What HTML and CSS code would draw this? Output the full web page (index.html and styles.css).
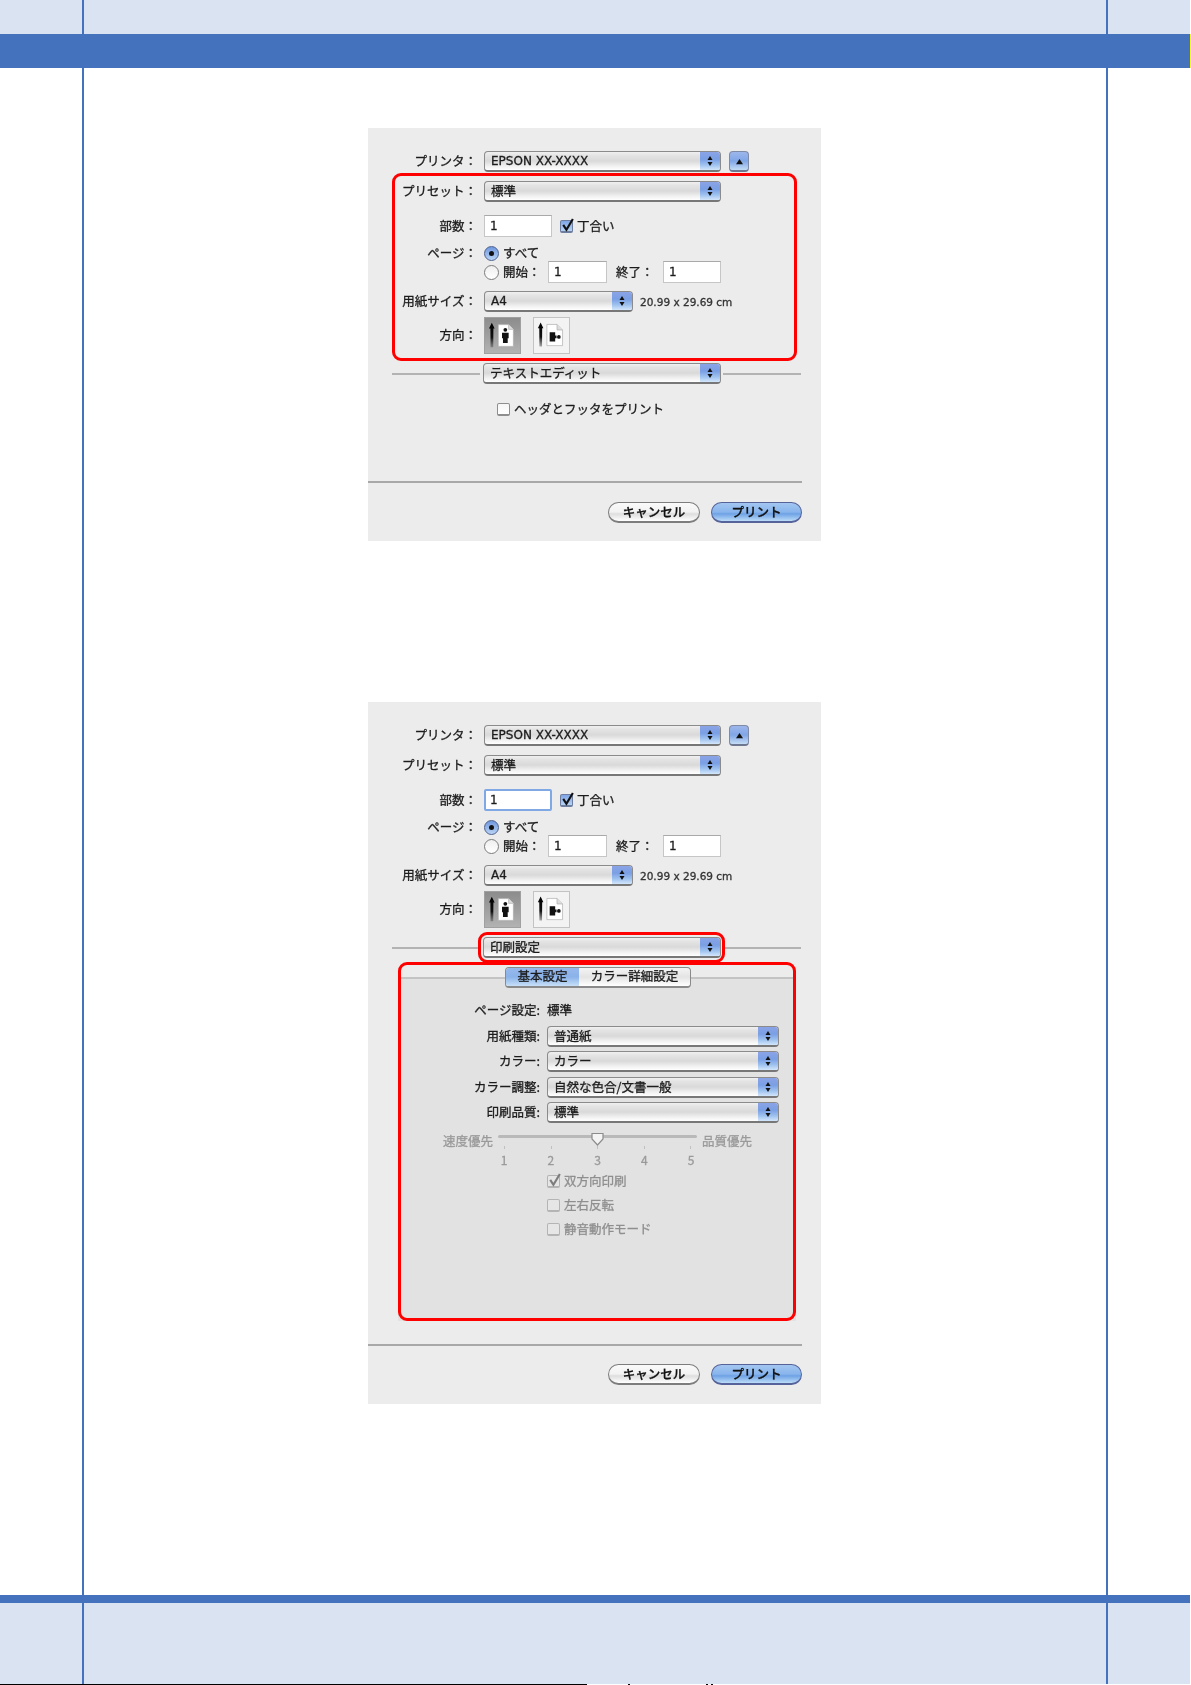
FILE: index.html
```html
<!DOCTYPE html>
<html lang="ja">
<head>
<meta charset="utf-8">
<title>プリント設定</title>
<link rel="stylesheet" href="styles.css">
</head>
<body>
<svg class="defs" aria-hidden="true">
  <defs>
    <linearGradient id="fade" x1="0" y1="0" x2="0" y2="1">
      <stop offset="0" stop-color="#000"/>
      <stop offset=".6" stop-color="#111"/>
      <stop offset="1" stop-color="#555" stop-opacity=".5"/>
    </linearGradient>
  </defs>
  <symbol id="updown" viewBox="0 0 8 14"><path d="M4 2 6.500 6H1.500zM4 12 1.500 8h5z"/></symbol>
  <symbol id="portrait" viewBox="0 0 37 37">
    <path d="M7.200 5 10.200 11 8.900 11 8.700 31 5.900 31 5.700 11 4.200 11z" fill="url(#fade)"/>
    <path d="M14 7H25L30 12V30H14z" fill="#fff" stroke="#aaa" stroke-width=".7"/>
    <path d="M25 7V12H30" fill="#ddd" stroke="#aaa" stroke-width=".7"/>
    <circle cx="21.500" cy="12.500" r="2" fill="#111"/>
    <path d="M18 15.500H25V21.500H24V26.500H19V21.500H18z" fill="#111"/>
  </symbol>
  <symbol id="landscape" viewBox="0 0 38 38">
    <path d="M7.200 5 10.200 11 8.900 11 8.700 31 5.900 31 5.700 11 4.200 11z" fill="url(#fade)"/>
    <path d="M14 7H25L31 13V30H14z" fill="#fff" stroke="#aaa" stroke-width=".7"/>
    <path d="M25 7V13H31" fill="#ddd" stroke="#aaa" stroke-width=".7"/>
    <path d="M17 15.500H23V19H24.500V22H23V25.500H17z" fill="#111"/>
    <circle cx="27" cy="20.500" r="2" fill="#111"/>
  </symbol>
</svg>
<div class="page">
  <div class="cols band"><div></div><div class="mid"></div><div></div></div>
  <div class="bar bar-top"></div>
  <div class="cols content">
    <div></div>
    <main class="mid sheet">

      <section class="dialog dialog-short">
        <div class="row row-printer">
          <span class="label">プリンタ：</span>
          <div class="select w-main"><span class="value latin">EPSON XX-XXXX</span><span class="stepper"><svg class="updown"><use href="#updown"/></svg></span></div>
          <button class="disclose"><svg viewBox="0 0 10 8"><path d="M5 1 9 7H1z"/></svg></button>
        </div>
        <div class="row row-preset">
          <span class="label">プリセット：</span>
          <div class="select w-main"><span class="value">標準</span><span class="stepper"><svg class="updown"><use href="#updown"/></svg></span></div>
        </div>
        <div class="row row-copies">
          <span class="label">部数：</span>
          <span class="field w-copies">1</span>
          <span class="check checked copies-check"><svg viewBox="0 0 14 14"><path d="M3 6.500 6 11 12 1" /></svg></span>
          <span class="opt">丁合い</span>
        </div>
        <div class="row row-all">
          <span class="label">ページ：</span>
          <span class="radio on"></span>
          <span class="opt">すべて</span>
        </div>
        <div class="row row-range">
          <span class="label"></span>
          <span class="radio"></span>
          <span class="opt range-from">開始：</span>
          <span class="field w-range">1</span>
          <span class="opt range-to">終了：</span>
          <span class="field w-range">1</span>
        </div>
        <div class="row row-paper">
          <span class="label">用紙サイズ：</span>
          <div class="select w-paper"><span class="value latin">A4</span><span class="stepper"><svg class="updown"><use href="#updown"/></svg></span></div>
          <span class="size">20.99 x 29.69 cm</span>
        </div>
        <div class="row row-orient">
          <span class="label">方向：</span>
          <span class="orient selected"><svg><use href="#portrait"/></svg></span>
          <span class="orient"><svg><use href="#landscape"/></svg></span>
        </div>
        <div class="sep">
          <span class="rule rule-l"></span>
          <div class="select w-sep"><span class="value">テキストエディット</span><span class="stepper"><svg class="updown"><use href="#updown"/></svg></span></div>
          <span class="rule rule-r"></span>
        </div>
        <div class="row row-hf">
          <span class="check"></span>
          <span class="opt">ヘッダとフッタをプリント</span>
        </div>
        <footer class="actions">
          <button class="btn">キャンセル</button>
          <button class="btn primary">プリント</button>
        </footer>
        <div class="mark mark-a"></div>
      </section>

      <section class="dialog dialog-tall">
        <div class="row row-printer">
          <span class="label">プリンタ：</span>
          <div class="select w-main"><span class="value latin">EPSON XX-XXXX</span><span class="stepper"><svg class="updown"><use href="#updown"/></svg></span></div>
          <button class="disclose"><svg viewBox="0 0 10 8"><path d="M5 1 9 7H1z"/></svg></button>
        </div>
        <div class="row row-preset">
          <span class="label">プリセット：</span>
          <div class="select w-main"><span class="value">標準</span><span class="stepper"><svg class="updown"><use href="#updown"/></svg></span></div>
        </div>
        <div class="row row-copies">
          <span class="label">部数：</span>
          <span class="field w-copies focus">1</span>
          <span class="check checked copies-check"><svg viewBox="0 0 14 14"><path d="M3 6.500 6 11 12 1" /></svg></span>
          <span class="opt">丁合い</span>
        </div>
        <div class="row row-all">
          <span class="label">ページ：</span>
          <span class="radio on"></span>
          <span class="opt">すべて</span>
        </div>
        <div class="row row-range">
          <span class="label"></span>
          <span class="radio"></span>
          <span class="opt range-from">開始：</span>
          <span class="field w-range">1</span>
          <span class="opt range-to">終了：</span>
          <span class="field w-range">1</span>
        </div>
        <div class="row row-paper">
          <span class="label">用紙サイズ：</span>
          <div class="select w-paper"><span class="value latin">A4</span><span class="stepper"><svg class="updown"><use href="#updown"/></svg></span></div>
          <span class="size">20.99 x 29.69 cm</span>
        </div>
        <div class="row row-orient">
          <span class="label">方向：</span>
          <span class="orient selected"><svg><use href="#portrait"/></svg></span>
          <span class="orient"><svg><use href="#landscape"/></svg></span>
        </div>
        <div class="sep">
          <span class="rule rule-l"></span>
          <div class="select w-sep"><span class="value">印刷設定</span><span class="stepper"><svg class="updown"><use href="#updown"/></svg></span></div>
          <span class="rule rule-r"></span>
        </div>

        <div class="panel">
          <div class="tabs">
            <span class="tab active">基本設定</span>
            <span class="tab">カラー詳細設定</span>
          </div>
          <div class="prow prow-static">
            <span class="plabel">ページ設定:</span>
            <span class="pvalue">標準</span>
          </div>
          <div class="prow prow-first">
            <span class="plabel">用紙種類:</span>
            <div class="select w-panel"><span class="value">普通紙</span><span class="stepper"><svg class="updown"><use href="#updown"/></svg></span></div>
          </div>
          <div class="prow">
            <span class="plabel">カラー:</span>
            <div class="select w-panel"><span class="value">カラー</span><span class="stepper"><svg class="updown"><use href="#updown"/></svg></span></div>
          </div>
          <div class="prow prow-wide">
            <span class="plabel">カラー調整:</span>
            <div class="select w-panel"><span class="value">自然な色合/文書一般</span><span class="stepper"><svg class="updown"><use href="#updown"/></svg></span></div>
          </div>
          <div class="prow">
            <span class="plabel">印刷品質:</span>
            <div class="select w-panel"><span class="value">標準</span><span class="stepper"><svg class="updown"><use href="#updown"/></svg></span></div>
          </div>
          <div class="slider">
            <span class="slabel">速度優先</span>
            <div class="scale">
              <div class="rail"><svg class="thumb" viewBox="0 0 13 14"><path d="M1 1.500H12V7L6.500 13 1 7z"/></svg></div>
              <div class="ticks"><i></i><i></i><i></i><i></i><i></i></div>
              <div class="nums"><span>1</span><span>2</span><span>3</span><span>4</span><span>5</span></div>
            </div>
            <span class="slabel slabel-r">品質優先</span>
          </div>
          <div class="dis first">
            <span class="check dim checked-dim"><svg viewBox="0 0 14 14"><path d="M3 6.500 6 11 12 1" /></svg></span>
            <span class="opt">双方向印刷</span>
          </div>
          <div class="dis">
            <span class="check dim"></span>
            <span class="opt">左右反転</span>
          </div>
          <div class="dis">
            <span class="check dim"></span>
            <span class="opt">静音動作モード</span>
          </div>
        </div>

        <footer class="actions">
          <button class="btn">キャンセル</button>
          <button class="btn primary">プリント</button>
        </footer>
        <div class="mark mark-b"></div>
        <div class="mark mark-c"></div>
      </section>

    </main>
    <div></div>
  </div>
  <div class="bar bar-bottom"></div>
  <div class="cols band band-low"><div></div><div class="mid"></div><div></div></div>
  <div class="edge"></div>
</div>
</body>
</html>
```
FILE: styles.css
```css
* { box-sizing: border-box; }
html, body { margin: 0; padding: 0; background: #fff; }
body { font-family: "Noto Sans CJK JP", "Noto Sans", sans-serif; font-size: 12.5px; color: #1c1c1c; -webkit-text-stroke: .3px currentColor; }
.defs { position: absolute; width: 0; height: 0; }
.page { width: 1191px; height: 1685px; display: flex; flex-direction: column; overflow: hidden; }

.cols { display: grid; grid-template-columns: 82px 1026px 82px; width: 1190px; }
.mid { border-left: 2px solid #4472bc; border-right: 2px solid #4472bc; }
.band { height: 34px; background: #dae3f2; }
.band-low { height: 81px; }
.bar { background: #4472bc; width: 1190px; }
.bar-top { height: 34px; width: 1191px; border-right: 1px solid #ff0; }
.bar-bottom { height: 8px; }
.content { height: 1527px; }
.sheet { padding: 60px 0 0 284px; display: flex; flex-direction: column; gap: 161px; }
.edge {
  height: 1px;
  width: 720px;
  background: linear-gradient(to right, #000 587px, #fff 587px, #fff 628px, #000 628px, #000 630px, #fff 630px, #fff 706px, #000 706px, #000 708px, #fff 708px, #fff 711px, #000 711px, #000 713px, #fff 713px);
}

.dialog {
  position: relative;
  width: 453px;
  background: #ececec;
  display: flex;
  flex-direction: column;
  filter: blur(.55px);
}
.dialog-short { height: 413px; }
.dialog-tall { height: 702px; }

.row { display: flex; align-items: center; flex: none; }
.label { width: 109px; margin-right: 7px; padding-bottom: 2px; text-align: right; white-space: nowrap; flex: none; }
.row-printer { margin-top: 23px; height: 21px; }
.row-preset { margin-top: 9px; height: 21px; }
.row-copies { margin-top: 13px; height: 22px; }
.row-all { margin-top: 9px; height: 15px; }
.row-range { height: 22px; }
.row-paper { margin-top: 8px; height: 21px; }
.row-orient { margin-top: 5px; height: 37px; }
.row-hf { margin: 18px 0 0 129px; height: 14px; }

.select {
  display: flex;
  align-items: center;
  height: 21px;
  flex: none;
  border: 1px solid #8b8b8b;
  border-bottom: 2px solid #777;
  border-radius: 4px;
  background: linear-gradient(#f0f0f0, #e4e4e4 18%, #d9d9d9 50%, #eee 75%, #fff);
  overflow: hidden;
}
.value { flex: 1; padding: 0 0 2px 6px; white-space: nowrap; }
.latin { font-family: "DejaVu Sans", sans-serif; font-size: 12px; padding-bottom: 1px; }
.stepper {
  width: 20px;
  align-self: stretch;
  display: flex;
  align-items: center;
  justify-content: center;
  background: linear-gradient(#8aa4e6, #7a9fe4 40%, #9cc0ee 70%, #d3e6fa);
}
.updown { width: 8px; height: 14px; fill: #111; }
.w-main { width: 237px; }
.w-paper { width: 149px; }
.w-sep { width: 238px; }
.w-panel { width: 232px; }

.disclose {
  width: 20px;
  height: 21px;
  margin-left: 8px;
  padding: 0;
  border: 1px solid #7f8aa5;
  border-bottom: 2px solid #6d7790;
  border-radius: 4px;
  background: linear-gradient(#9db6ec, #80a6e6 50%, #c5dcf6);
  display: flex;
  align-items: center;
  justify-content: center;
}
.disclose svg { width: 9px; height: 7px; fill: #111; }

.field {
  height: 22px;
  background: #fff;
  border: 1px solid #c6c6c6;
  border-top-color: #a9a9a9;
  padding-left: 5px;
  line-height: 20px;
  flex: none;
  font-family: "DejaVu Sans", sans-serif;
  font-size: 12px;
}
.field.focus { border: 2px solid #7fa8e4; border-radius: 2px; padding-left: 4px; line-height: 18px; }
.w-copies { width: 68px; }
.w-range { width: 59px; }

.check {
  width: 13px;
  height: 13px;
  flex: none;
  background: linear-gradient(#f6f6f6, #fff);
  border: 1px solid #8e8e8e;
  border-bottom-width: 2px;
  border-radius: 2px;
  position: relative;
}
.check svg {
  position: absolute;
  left: -1px;
  top: -3px;
  width: 15px;
  height: 15px;
  fill: none;
  stroke: #111;
  stroke-width: 2;
}
.check.checked { background: linear-gradient(#7fa5e6, #b7d2f4); border-color: #6e7ea0; }
.copies-check { margin-left: 8px; }
.opt { margin-left: 4px; padding-bottom: 2px; white-space: nowrap; }

.radio {
  width: 15px;
  height: 15px;
  flex: none;
  border: 1px solid #7c7c7c;
  border-radius: 50%;
  background: linear-gradient(#efefef, #fff);
  position: relative;
}
.radio.on { background: linear-gradient(#6f97df, #b9d3f5); border-color: #4d628e; }
.radio.on::after {
  content: "";
  position: absolute;
  left: 4px;
  top: 4px;
  width: 5px;
  height: 5px;
  border-radius: 50%;
  background: #111;
}
.range-from { width: 45px; }
.range-to { width: 43px; margin-left: 9px; margin-right: 4px; }
.row-range .field:last-child { width: 58px; }
.size { margin-left: 7px; font-family: "DejaVu Sans", sans-serif; font-size: 10.5px; white-space: nowrap; color: #333; }

.orient {
  width: 37px;
  height: 37px;
  margin-right: 12px;
  flex: none;
  border: 1px solid #c3c3c3;
  background: #f3f3f3;
}
.orient.selected { background: linear-gradient(#8c8c8c, #b2b2b2); border-color: #a0a0a0; }
.orient svg { display: block; width: 100%; height: 100%; }

.sep { display: flex; align-items: center; margin: 9px 0 0 24px; height: 21px; flex: none; }
.rule { height: 2px; background: #b3b3b3; flex: none; }
.rule-l { width: 88px; margin-right: 3px; }
.rule-r { width: 78px; margin-left: 2px; }

.actions {
  margin-top: auto;
  width: 434px;
  height: 60px;
  flex: none;
  border-top: 2px solid #a8a8a8;
  padding: 19px 0 0;
  display: flex;
  justify-content: flex-end;
  gap: 11px;
  align-items: flex-start;
}
.dialog-tall .actions { padding-top: 18px; }
.btn {
  width: 92px;
  height: 21px;
  padding: 0 0 2px;
  font: 500 12.5px "Noto Sans CJK JP", "Noto Sans", sans-serif;
  -webkit-text-stroke: .3px currentColor;
  line-height: 15px;
  color: #111;
  border: 1px solid #7d7d7d;
  border-bottom-width: 2px;
  border-radius: 11px;
  background: linear-gradient(#fafafa, #f2f2f2 50%, #dedede 60%, #fff);
}
.primary {
  width: 91px;
  border-color: #55639a;
  background: linear-gradient(#a3c6f1, #88b5ec 50%, #6ea2e5 60%, #bcdcf8);
}

.panel {
  margin: 19px 0 0 30px;
  width: 398px;
  height: 344px;
  flex: none;
  background: #e2e2e2;
  border-top: 2px solid #c4c4c4;
}
.tabs {
  display: flex;
  width: 186px;
  height: 21px;
  margin: -12px 0 0 107px;
  border: 1px solid #8a8a8a;
  border-bottom-width: 2px;
  border-radius: 4px;
  overflow: hidden;
  background: linear-gradient(#f4f4f4, #e4e4e4 50%, #fff);
  position: relative;
}
.tab { display: flex; align-items: center; justify-content: center; flex: 1; padding-bottom: 2px; white-space: nowrap; line-height: 1; }
.tab.active { flex: none; width: 73px; background: linear-gradient(#96b8ec, #8ab3ea 50%, #c8e0f8); }

.prow { display: flex; align-items: center; margin-top: 4px; height: 21px; }
.prow-static { margin-top: 12px; height: 20px; }
.prow-first { margin-top: 6px; }
.prow-wide { margin-top: 5px; }
.plabel, .pvalue { padding-bottom: 2px; }
.plabel { width: 142px; margin-right: 7px; text-align: right; white-space: nowrap; flex: none; }

.slider { display: flex; align-items: flex-start; margin-top: 9px; color: #9a9a9a; }
.slabel { width: 95px; text-align: right; white-space: nowrap; flex: none; line-height: 18px; }
.slabel-r { width: 60px; margin-left: 5px; text-align: left; }
.scale { width: 199px; margin-left: 5px; flex: none; }
.rail { position: relative; margin-top: 3px; height: 3px; background: #b9b9b9; border-radius: 2px; }
.thumb { position: absolute; left: 93px; top: -3px; width: 13px; height: 14px; fill: #f4f4f4; stroke: #8c8c8c; stroke-width: 1.200; }
.ticks { display: flex; justify-content: space-between; padding: 0 6px; margin-top: 8px; height: 4px; }
.ticks i { width: 1px; height: 3px; background: #c0c0c0; }
.nums { display: flex; justify-content: space-between; padding: 0 2px; height: 16px; margin-top: 2px; font-size: 12px; line-height: 16px; }
.nums span { width: 8px; text-align: center; }

.dis { display: flex; align-items: center; margin: 10px 0 0 149px; height: 14px; color: #8f8f8f; }
.dis.first { margin-top: 6px; }
.check.dim { background: #e6e6e6; border-color: #b4b4b4; }
.check.dim svg { stroke: #7d7d7d; }

.mark { position: absolute; border: 3px solid #f00; border-radius: 9px; pointer-events: none; }
.mark-a { left: 24px; top: 45px; width: 405px; height: 188px; }
.mark-b { left: 110px; top: 230px; width: 247px; height: 31px; }
.mark-c { left: 30px; top: 260px; width: 398px; height: 359px; }
```
